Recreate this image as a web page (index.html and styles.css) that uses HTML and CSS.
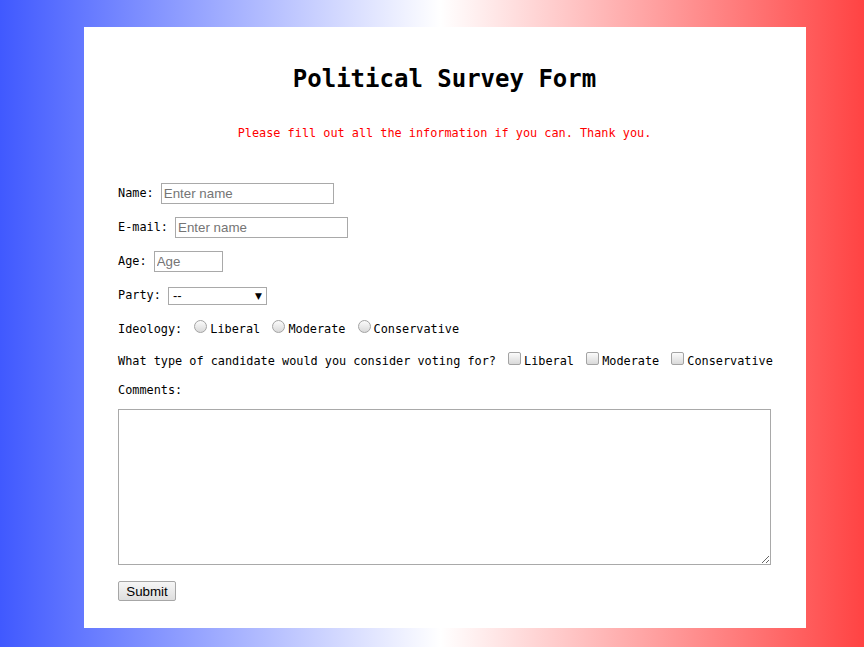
FILE: index.html
```html
<!DOCTYPE html>
<html>
<head>
<meta charset="utf-8">
<title>Political Survey Form</title>
<link rel="stylesheet" href="styles.css">
</head>
<body>
<main class="card">
  <h1 class="title">Political Survey Form</h1>
  <p class="intro">Please fill out all the information if you can. Thank you.</p>
  <form class="form">
    <div class="row">Name: <input class="field field-name" type="text" placeholder="Enter name"></div>
    <div class="row">E-mail: <input class="field field-name" type="text" placeholder="Enter name"></div>
    <div class="row">Age: <input class="field field-age" type="text" placeholder="Age"></div>
    <div class="row">Party: <span class="select-wrap"><select class="select"><option>--</option></select><span class="arrow">&#9660;</span></span></div>
    <div class="row row-ideology">Ideology: <input class="radio" type="radio" name="ideo"><span class="opt">Liberal</span> <input class="radio" type="radio" name="ideo"><span class="opt">Moderate</span> <input class="radio" type="radio" name="ideo"><span class="opt">Conservative</span></div>
    <div class="row row-candidate">What type of candidate would you consider voting for? <input class="check" type="checkbox"><span class="opt">Liberal</span> <input class="check" type="checkbox"><span class="opt">Moderate</span> <input class="check" type="checkbox"><span class="opt">Conservative</span></div>
    <div class="row row-comments">Comments:</div>
    <textarea class="comments"></textarea>
    <div class="submit-row"><button class="submit" type="button">Submit</button></div>
  </form>
</main>
</body>
</html>
```
FILE: styles.css
```css
html, body {
  margin: 0;
  padding: 0;
}
body {
  width: 864px;
  height: 647px;
  background: linear-gradient(to right, #4059ff 0%, #ffffff 51%, #ff4343 100%);
  font-family: "DejaVu Sans Mono", "Liberation Mono", monospace;
  font-size: 11.85px;
  color: #000;
  overflow: hidden;
  padding-top: 27px;
  box-sizing: border-box;
}
.card {
  display: block;
  margin-left: 84px;
  width: 722px;
  height: 601px;
  background: #fff;
  box-sizing: border-box;
  padding: 37px 35px 0 34px;
}
.title {
  margin: 0;
  text-align: center;
  font-size: 24px;
  line-height: 30px;
  font-weight: bold;
}
.intro {
  margin: 31px 0 0;
  text-align: center;
  color: #ff0000;
  line-height: 16px;
}
.form {
  margin-top: 42px;
}
.row {
  height: 21px;
  line-height: 21px;
  margin-bottom: 13px;
  white-space: nowrap;
}
.row-ideology { margin-bottom: 11px; }
.row-candidate { margin-bottom: 8px; }
.row-comments { margin-bottom: 8px; }
.field {
  box-sizing: border-box;
  height: 21px;
  border: 1px solid #a9a9a9;
  padding: 1px 2px;
  margin: 0;
  font-family: "Liberation Sans", Arial, sans-serif;
  font-size: 13.33px;
  vertical-align: middle;
  outline: none;
}
.field::placeholder { color: #757575; }
.field-name { width: 173px; }
.field-age { width: 69px; }
.select-wrap {
  position: relative;
  display: inline-block;
  vertical-align: middle;
  height: 18px;
}
.select {
  -webkit-appearance: none;
  appearance: none;
  box-sizing: border-box;
  width: 99px;
  height: 18px;
  border: 1px solid #a9a9a9;
  background: #fff;
  border-radius: 0;
  margin: 0;
  padding: 0 4px;
  font-family: "Liberation Sans", Arial, sans-serif;
  font-size: 13px;
  line-height: 16px;
  vertical-align: top;
}
.arrow {
  position: absolute;
  right: 5px;
  top: 0;
  line-height: 18px;
  font-size: 9px;
  font-family: "DejaVu Sans", sans-serif;
  pointer-events: none;
}
.radio, .check {
  -webkit-appearance: none;
  appearance: none;
  box-sizing: border-box;
  width: 13px;
  height: 13px;
  margin: 0 3px 0 5px;
  border: 1px solid #a3a3a3;
  background: linear-gradient(#fbfbfb, #d9d9d9);
  vertical-align: -1px;
  position: relative;
  top: -1px;
}
.radio { border-radius: 50%; }
.check { border-radius: 2px; }
.comments {
  display: block;
  box-sizing: border-box;
  width: 653px;
  height: 156px;
  border: 1px solid #a9a9a9;
  margin: 0;
  padding: 2px;
  resize: both;
  outline: none;
}
.submit-row {
  margin-top: 16px;
}
.submit {
  box-sizing: border-box;
  width: 58px;
  height: 20px;
  margin: 0;
  padding: 0;
  border: 1px solid #a6a6a6;
  border-radius: 2px;
  background: linear-gradient(#f6f6f6, #dedede);
  font-family: "Liberation Sans", Arial, sans-serif;
  font-size: 13.33px;
  color: #000;
}
```
